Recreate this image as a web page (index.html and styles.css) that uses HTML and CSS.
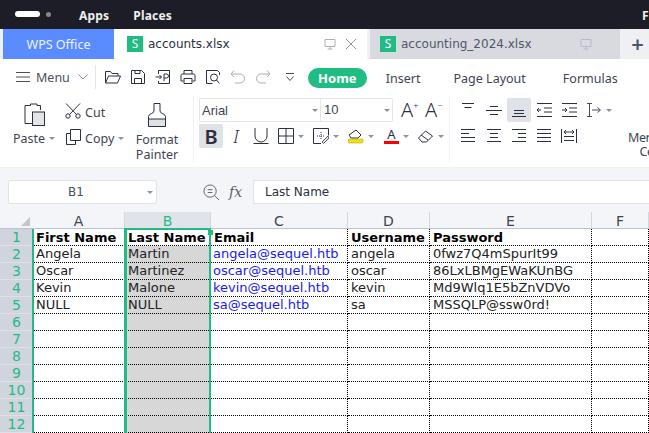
FILE: index.html
```html
<!DOCTYPE html>
<html lang="en">
<head>
<meta charset="utf-8">
<title>accounts.xlsx</title>
<link rel="stylesheet" href="styles.css">
</head>
<body>
<header class="topbar">
  <span class="pill"></span><span class="dot"></span>
  <span class="top-item apps">Apps</span><span class="top-item">Places</span>
  <span class="top-item top-right">F</span>
</header>
<nav class="tabs">
  <div class="tab-home">WPS Office</div>
  <div class="tab tab-active">
    <span class="sheet-logo">S</span><span class="tab-name">accounts.xlsx</span>
    <svg class="tab-mon" viewBox="0 0 12 12"><path d="M1 1.500h10v7H1zM6 8.500v2.500M3.500 11h5" fill="none" stroke="#aab0bf"/></svg>
    <svg class="tab-x" viewBox="0 0 12 12"><path d="M1 1l10 10M11 1L1 11" fill="none" stroke="#8b92a3"/></svg>
  </div>
  <div class="tab tab-other">
    <span class="sheet-logo">S</span><span class="tab-name">accounting_2024.xlsx</span>
    <svg class="tab-mon" viewBox="0 0 12 12"><path d="M1 1.500h10v7H1zM6 8.500v2.500M3.500 11h5" fill="none" stroke="#b4bbd0"/></svg>
  </div>
  <div class="tab-add">+</div>
</nav>
<div class="menubar">
  <svg class="burger" viewBox="0 0 14 10"><path d="M0 .5h14M0 5h14M0 9.500h14" stroke="#4a4f5c" fill="none"/></svg>
  <span class="menu-label">Menu</span>
  <svg class="chev" viewBox="0 0 10 6"><path d="M.5.5L5 5 9.500.5" stroke="#8b92a3" fill="none"/></svg>
  <span class="vsep"></span>
  <div class="quick">
    <svg viewBox="0 0 16 16"><path d="M.5 14V2.500h5l1.500 2h6v2.500M.5 14l3-7h12l-3 7z" fill="none" stroke="#2b3040"/></svg>
    <svg viewBox="0 0 16 16"><path d="M1.500 1.500h10l3 3v10h-13zM4.500 14.500v-5h7v5M5 1.500v3h5v-3" fill="none" stroke="#2b3040"/></svg>
    <svg viewBox="0 0 16 16"><path d="M3.500 5V1.500h11v13h-11V12M.5 8h6M4.500 6l2 2-2 2M9 9h2.500a1.500 1.500 0 000-4H9v7" fill="none" stroke="#2b3040"/></svg>
    <svg viewBox="0 0 16 16"><path d="M4 5V1.500h8V5M3.500 12H1V6.500A1.500 1.500 0 012.500 5h11A1.500 1.500 0 0115 6.500V12h-2.500M4 9.500h8v5H4z" fill="none" stroke="#2b3040"/></svg>
    <svg viewBox="0 0 16 16"><path d="M14.500 6V3.500l-2-2h-11v13h6" fill="none" stroke="#2b3040"/><circle cx="9" cy="8.500" r="3.500" fill="none" stroke="#2b3040"/><path d="M11.500 11l3 3.500" stroke="#2b3040"/></svg>
    <svg viewBox="0 0 16 16"><path d="M4 1.500L1 5l3 3M1 5h9a4.500 4.500 0 010 9H5" fill="none" stroke="#a9aeb9"/></svg>
    <svg viewBox="0 0 16 16"><path d="M12 1.500L15 5l-3 3M15 5H6a4.500 4.500 0 000 9h5" fill="none" stroke="#a9aeb9"/></svg>
    <svg class="more" viewBox="0 0 10 10"><path d="M1 1.500h8M1.500 4.500L5 8.500l3.500-4" fill="none" stroke="#4a4f5c"/></svg>
  </div>
  <span class="home-pill">Home</span>
  <span class="menu-tab insert">Insert</span>
  <span class="menu-tab layout">Page Layout</span>
  <span class="menu-tab formulas">Formulas</span>
</div>
<section class="ribbon">
  <div class="rb-group clip-group">
    <div class="paste">
      <svg class="ic-paste" viewBox="0 0 22 23"><path d="M16.500 7V2.500H13V1H6.500v1.500H1v18h7" fill="none" stroke="#2b3040"/><rect x="8.500" y="9" width="12" height="13.500" fill="#e3e5e8" stroke="#2b3040"/></svg>
      <span class="rb-label">Paste<i class="caret"></i></span>
    </div>
    <div class="cutcopy">
      <span class="rb-label row-item"><svg class="ic16w" viewBox="0 0 16 16"><path d="M1 .5L11.500 11.500M15 .5L4.500 11.500" fill="none" stroke="#2b3040"/><circle cx="3" cy="13" r="2.200" fill="none" stroke="#2b3040"/><circle cx="13" cy="13" r="2.200" fill="none" stroke="#2b3040"/></svg>Cut</span>
      <span class="rb-label row-item"><svg class="ic16w" viewBox="0 0 16 16"><path d="M5.500 4.500h-4v11h9v-4M5.500.5h10v11h-10z" fill="none" stroke="#2b3040"/></svg>Copy<i class="caret"></i></span>
    </div>
    <div class="painter">
      <svg class="ic-brush" viewBox="0 0 18 24"><path d="M.5 13.500v10h17v-10" fill="#fff" stroke="#2b3040"/><path d="M1 16h16v7H1z" fill="#dfe1e5"/><path d="M.5 16h17M.5 13.500C1 10 6 11 6 8V.5h6V8c0 3 5 2 5.500 5.500" fill="none" stroke="#2b3040"/></svg>
      <span class="rb-label center">Format<br>Painter</span>
    </div>
  </div>
  <div class="rb-group font-group">
    <div class="font-row">
      <div class="fontbox"><span class="f-name">Arial</span><i class="caret"></i><span class="f-size">10</span><i class="caret"></i></div>
      <span class="grow-a">A<sup>+</sup></span><span class="grow-a shrink">A<sup>&#8722;</sup></span>
    </div>
    <div class="font-row fmt-row">
      <span class="bold-btn">B</span>
      <span class="ital">I</span>
      <svg class="fmt" viewBox="0 0 16 16"><path d="M2 0v8a6 6 0 0012 0V0M.5 15.500h15" fill="none" stroke="#2b3040"/></svg>
      <svg class="fmt" viewBox="0 0 16 16"><path d="M.5.5h15v15H.5zM8 .5v15M.5 8h15" fill="none" stroke="#2b3040"/></svg><i class="caret"></i>
      <svg class="fmt" viewBox="0 0 16 16"><path d="M8 15.500H.5V.5h15v7" fill="none" stroke="#2b3040"/><path d="M4 8h8M8 4v8" stroke="#2b3040" stroke-dasharray="1 1"/><path d="M9 14l6-6 1 2-5.500 5.500z" fill="#e3e5e8" stroke="#555"/></svg><i class="caret"></i>
      <svg class="fmt" viewBox="0 0 16 16"><path d="M1 7l7-5 5 5-3 3H3z" fill="#fff" stroke="#2b3040"/><rect y="11" width="15" height="4" rx="1" fill="#f5e400" stroke="#9a9a20" stroke-width=".5"/></svg><i class="caret"></i>
      <span class="font-col">A</span><i class="caret"></i>
      <svg class="fmt" viewBox="0 0 16 16"><path d="M.5 10l7-7 7 5-6 6H4z" fill="#fff" stroke="#2b3040"/><path d="M3 7l7 5" stroke="#2b3040"/></svg><i class="caret"></i>
    </div>
  </div>
  <div class="rb-group align-group">
    <div class="al-row">
      <svg class="al" viewBox="0 0 16 16"><path d="M1 1.500h12M3.500 5.500h7" stroke="#2b3040" fill="none"/></svg>
      <svg class="al" viewBox="0 0 16 16"><path d="M4 4.500h8M0 8.500h16M4 12.500h8" stroke="#2b3040" fill="none"/></svg>
      <span class="al-on"><svg class="al" viewBox="0 0 16 16"><path d="M3 8.500h10M3 11.500h10M1 14.500h14" stroke="#2b3040" fill="none"/></svg></span>
      <svg class="al" viewBox="0 0 16 16"><path d="M1 1.500h15M1 14.500h15M8 6h8M8 10h8M5 8H1M3 6L1 8l2 2" stroke="#2b3040" fill="none"/></svg>
      <svg class="al" viewBox="0 0 16 16"><path d="M1 1.500h15M1 14.500h15M8 6h8M8 10h8M1 8h5M4 6l2 2-2 2" stroke="#2b3040" fill="none"/></svg>
      <svg class="al" viewBox="0 0 16 16"><path d="M1 1.500h5M1 14.500h5M3.500 1.500v13M6 8h8M11.500 5.500L14.500 8l-3 2.500" stroke="#4a4f5c" fill="none"/></svg><i class="caret"></i>
    </div>
    <div class="al-row">
      <svg class="al" viewBox="0 0 16 16"><path d="M0 1.500h14M0 5.500h8M0 9.500h14M0 13.500h14" stroke="#2b3040" fill="none"/></svg>
      <svg class="al" viewBox="0 0 16 16"><path d="M1 1.500h14M4 5.500h8M4 9.500h8M1 13.500h14" stroke="#2b3040" fill="none"/></svg>
      <svg class="al" viewBox="0 0 16 16"><path d="M1 1.500h14M7 5.500h8M7 9.500h8M1 13.500h14" stroke="#2b3040" fill="none"/></svg>
      <svg class="al" viewBox="0 0 16 16"><path d="M1 1.500h14M1 5.500h14M1 9.500h14M1 13.500h14" stroke="#2b3040" fill="none"/></svg>
      <svg class="al" viewBox="0 0 16 16"><path d="M.5 1v14M15.500 1v14M3 8.500h10M3 12.500h10M3 4h10M5 2L3 4l2 2M11 2l2 2-2 2" stroke="#2b3040" fill="none"/></svg>
    </div>
  </div>
  <div class="merge rb-label center">Merge and<br>Center</div>
</section>
<div class="formula">
  <div class="namebox"><span>B1</span><i class="caret"></i></div>
  <svg class="zoomq" viewBox="0 0 18 18"><circle cx="7.500" cy="7.500" r="6.500" fill="none" stroke="#5a6070"/><path d="M12 12l5 5M5 6h5M5 9h5" stroke="#5a6070" fill="none"/></svg>
  <span class="fx">fx</span>
  <div class="finput">Last Name</div>
</div>
<main class="sheet">
  <div class="grid">
    <div class="corner"><i></i></div>
    <div class="ch">A</div><div class="ch on">B</div><div class="ch">C</div><div class="ch">D</div><div class="ch">E</div><div class="ch">F</div>

    <div class="rh">1</div><div class="c b">First Name</div><div class="c b s">Last Name</div><div class="c b">Email</div><div class="c b">Username</div><div class="c b">Password</div><div class="c"></div>
    <div class="rh">2</div><div class="c">Angela</div><div class="c s">Martin</div><div class="c l">angela@sequel.htb</div><div class="c">angela</div><div class="c">0fwz7Q4mSpurIt99</div><div class="c"></div>
    <div class="rh">3</div><div class="c">Oscar</div><div class="c s">Martinez</div><div class="c l">oscar@sequel.htb</div><div class="c">oscar</div><div class="c">86LxLBMgEWaKUnBG</div><div class="c"></div>
    <div class="rh">4</div><div class="c">Kevin</div><div class="c s">Malone</div><div class="c l">kevin@sequel.htb</div><div class="c">kevin</div><div class="c">Md9Wlq1E5bZnVDVo</div><div class="c"></div>
    <div class="rh">5</div><div class="c">NULL</div><div class="c s">NULL</div><div class="c l">sa@sequel.htb</div><div class="c">sa</div><div class="c">MSSQLP@ssw0rd!</div><div class="c"></div>
    <div class="rh">6</div><div class="c"></div><div class="c s"></div><div class="c"></div><div class="c"></div><div class="c"></div><div class="c"></div>
    <div class="rh">7</div><div class="c"></div><div class="c s"></div><div class="c"></div><div class="c"></div><div class="c"></div><div class="c"></div>
    <div class="rh">8</div><div class="c"></div><div class="c s"></div><div class="c"></div><div class="c"></div><div class="c"></div><div class="c"></div>
    <div class="rh">9</div><div class="c"></div><div class="c s"></div><div class="c"></div><div class="c"></div><div class="c"></div><div class="c"></div>
    <div class="rh">10</div><div class="c"></div><div class="c s"></div><div class="c"></div><div class="c"></div><div class="c"></div><div class="c"></div>
    <div class="rh">11</div><div class="c"></div><div class="c s"></div><div class="c"></div><div class="c"></div><div class="c"></div><div class="c"></div>
    <div class="rh">12</div><div class="c"></div><div class="c s"></div><div class="c"></div><div class="c"></div><div class="c"></div><div class="c"></div>
  </div>
  <div class="sel-a"></div>
  <div class="sel-b"><span class="handle"></span></div>
</main>
</body>
</html>
```
FILE: styles.css
```css
* { box-sizing: border-box; }
html, body { margin: 0; height: 433px; width: 649px; overflow: hidden; background: #fff; }
body { font-family: "Noto Sans", sans-serif; color: #2b3040; font-size: 12px; }
i { font-style: normal; }
svg { flex: none; display: block; }

.topbar { height: 29px; background: #1c1d26; display: flex; align-items: center; color: #f0f0f0; font-weight: 700; font-size: 12px; padding: 1px 0 0 15px; }
.pill { width: 25px; height: 6px; background: #fff; border-radius: 3px; margin-top: -2px; }
.dot { width: 5px; height: 5px; background: #888; border-radius: 50%; margin: -2px 0 0 6px; }
.top-item { margin-right: 24px; letter-spacing: .2px; }
.apps { margin-left: 28px; }
.top-right { margin: 0 -1px 0 auto; width: 8px; }

.tabs { height: 30px; display: flex; background: #eef0f3; }
.tab-home { margin-left: 3px; width: 111px; flex: none; background: #5b8cff; color: #eef3ff; display: flex; align-items: center; justify-content: center; font-size: 12.500px; }
.tab { display: flex; align-items: center; flex: none; font-family: "DejaVu Sans", sans-serif; font-size: 12px; }
.tab-active { width: 253px; background: #fff; padding-left: 13px; margin-right: 3px; color: #2b3040; }
.tab-other { width: 250px; background: #d8dae0; padding-left: 10px; color: #50566a; }
.sheet-logo { width: 16px; height: 16px; background: #1fbc83; color: #fff; font-size: 12px; line-height: 16px; text-align: center; margin-right: 5px; font-family: "Noto Sans", sans-serif; }
.tab-active .tab-mon { margin-left: auto; width: 12px; height: 12px; }
.tab-x { width: 12px; height: 12px; margin: 0 10px 0 9px; }
.tab-other .tab-mon { margin-left: 48px; width: 12px; height: 12px; }
.tab-add { flex: 1; text-align: center; font-size: 22px; font-weight: 600; line-height: 28px; color: #4a5570; padding-left: 6px; }

.menubar { height: 36px; display: flex; align-items: center; background: #fff; padding-left: 16px; font-size: 12.500px; }
.burger { width: 14px; height: 10px; }
.menu-label { margin-left: 6px; color: #4a4f5c; }
.chev { width: 10px; height: 6px; margin-left: 8px; }
.vsep { width: 1px; height: 24px; background: #e4e6ea; margin-left: 7px; }
.quick { display: flex; align-items: center; margin-left: 9px; gap: 9px; }
.quick svg { width: 16px; height: 16px; }
.quick .more { width: 10px; height: 10px; margin-left: 5px; }
.home-pill { margin: 2px 0 0 13px; background: #1fbc83; color: #fff; font-weight: 700; font-size: 13px; height: 20px; width: 59px; flex: none; border-radius: 10px; display: flex; align-items: center; justify-content: center; }
.menu-tab { color: #3f4452; margin-top: 2px; }
.insert { margin-left: 19px; }
.layout { margin-left: 33px; }
.formulas { margin-left: 37px; }

.ribbon { height: 73px; display: flex; background: #fff; border-bottom: 1px solid #f0f1f4; overflow: hidden; }
.rb-group { flex: none; border-right: 1px solid #eef0f3; height: 68px; display: flex; }
.rb-label { font-size: 12.500px; color: #3f4452; display: flex; align-items: center; line-height: 15px; }
.center { text-align: center; display: block; }
.caret { display: inline-block; flex: none; width: 0; height: 0; border: 3px solid transparent; border-top: 3px solid #8b92a3; border-bottom: 0; margin-left: 4px; }

.clip-group { width: 194px; padding: 2px 0 0 13px; }
.paste { width: 36px; flex: none; display: flex; flex-direction: column; align-items: flex-start; }
.ic-paste { width: 22px; height: 23px; margin: 6px 0 0 11px; }
.paste .rb-label { margin-top: 5px; white-space: nowrap; }
.cutcopy { flex: none; margin-left: 16px; width: 67px; display: flex; flex-direction: column; gap: 10px; padding-top: 6px; }
.row-item { height: 16px; padding-top: 2px; }
.ic16w { width: 16px; height: 16px; margin: -2px 4px 0 0; }
.painter { flex: none; display: flex; flex-direction: column; align-items: center; width: 50px; }
.ic-brush { width: 18px; height: 24px; margin-top: 6px; }
.painter .rb-label { margin-top: 5px; }

.font-group { width: 256px; padding: 3px 0 0 5px; flex-direction: column; gap: 2px; }
.font-row { display: flex; align-items: center; }
.fontbox { width: 194px; height: 24px; border: 1px solid #e3e5e9; border-radius: 2px; display: flex; align-items: center; font-family: "Liberation Sans", sans-serif; font-size: 13px; color: #3f4452; padding-left: 2px; }
.f-name { width: 106px; flex: none; }
.f-size { width: 60px; flex: none; border-left: 1px solid #e3e5e9; height: 22px; line-height: 22px; margin-left: 2px; padding-left: 3px; font-size: 13px; }
.grow-a { font-size: 20px; margin-left: 8px; color: #2b3040; line-height: 20px; font-weight: 300; width: 24px; flex: none; }
.grow-a sup { font-size: 9px; line-height: 0; vertical-align: 8px; }
.shrink { margin-left: 0; }
.fmt-row { height: 24px; }
.bold-btn { width: 24px; height: 24px; flex: none; background: #dfe2e6; border-radius: 2px; font-size: 20px; font-weight: 600; display: flex; align-items: center; justify-content: center; }
.ital { font-style: italic; font-weight: 300; font-size: 18px; width: 16px; margin-left: 5px; text-align: center; }
.fmt { width: 16px; height: 16px; margin-left: 9px; }
.font-col { width: 15px; height: 16px; flex: none; margin-left: 10px; text-align: center; font-size: 13px; line-height: 13px; border-bottom: 3px solid #f00; }

.align-group { width: 161px; flex-direction: column; padding-top: 3px; gap: 2px; border: 0; margin-left: 11px; }
.al-row { display: flex; align-items: center; height: 24px; gap: 9px; }
.al { width: 16px; height: 16px; }
.al-on { width: 24px; height: 24px; flex: none; background: #dfe2e6; border-radius: 2px; display: flex; align-items: center; justify-content: center; margin: 0 -4px; }
.al-row .caret { margin-left: -5px; }
.merge { flex: none; white-space: nowrap; margin: 36px 0 0 6px; line-height: 14px; letter-spacing: -.4px; }

.formula { height: 44px; background: #f3f5f8; display: flex; align-items: center; padding: 4px 0 0 8px; }
.namebox { width: 149px; height: 24px; flex: none; background: #fff; border: 1px solid #dfe2e7; border-radius: 2px; display: flex; align-items: center; font-size: 12px; color: #4a4f5c; padding-right: 3px; }
.namebox span { flex: 1; text-align: center; font-family: "DejaVu Sans", sans-serif; }
.zoomq { width: 17px; height: 17px; margin-left: 46px; }
.fx { font-family: "DejaVu Serif", serif; font-style: italic; font-size: 14px; color: #5a6070; margin-left: 9px; width: 24px; flex: none; }
.finput { flex: 1; height: 24px; background: #fff; border: 1px solid #dfe2e7; border-right: 0; border-radius: 2px 0 0 2px; display: flex; align-items: center; padding-left: 11px; font-family: "DejaVu Sans", sans-serif; font-size: 12px; color: #2b3040; }

.sheet { position: relative; height: 221px; background: #fff; overflow: hidden; }
.grid { display: grid; grid-template-columns: 33px 92px 86px 137px 82px 162px 57px; grid-template-rows: repeat(13, 17px); font-family: "DejaVu Sans", sans-serif; font-size: 13px; }
.corner { background: #f3f5f8; border-bottom: 1px solid #b9c2d6; position: relative; }
.corner i { position: absolute; right: 3px; bottom: 2px; width: 0; height: 0; border-left: 9px solid transparent; border-bottom: 9px solid #c2c6ce; }
.ch { background: #f3f5f8; border-bottom: 1px solid #b9c2d6; border-right: 1px solid #d3d7e0; text-align: center; line-height: 18px; color: #3f4452; font-size: 14px; }
.ch.on { background: #e1e3ea; color: #1fbc83; }
.rh { background: #d0d4dd; color: #1fbc83; text-align: center; line-height: 17px; font-size: 14px; border-bottom: 1px solid #dde0e7; }
.c { border-bottom: 1px dotted #000; border-right: 1px dotted #000; padding-left: 3px; line-height: 15px; white-space: nowrap; color: #222; overflow: hidden; }
.c.b { font-weight: 700; color: #000; line-height: 17px; }
.c.s { background: #d7d7d7; border-right: 0; }
.c.b.s { background: #fff; }
.c.l { color: #1a1aee; padding-left: 2px; }
.sel-a { position: absolute; left: 32px; top: 17px; width: 2px; bottom: 0; background: #1fbc83; }
.sel-b { position: absolute; left: 124px; top: 16px; width: 87px; bottom: 0; border: 2px solid #1fbc83; border-left-width: 3px; border-bottom: 0; }
.handle { position: absolute; right: -4px; top: 0; width: 5px; height: 5px; background: #1fbc83; }
```
